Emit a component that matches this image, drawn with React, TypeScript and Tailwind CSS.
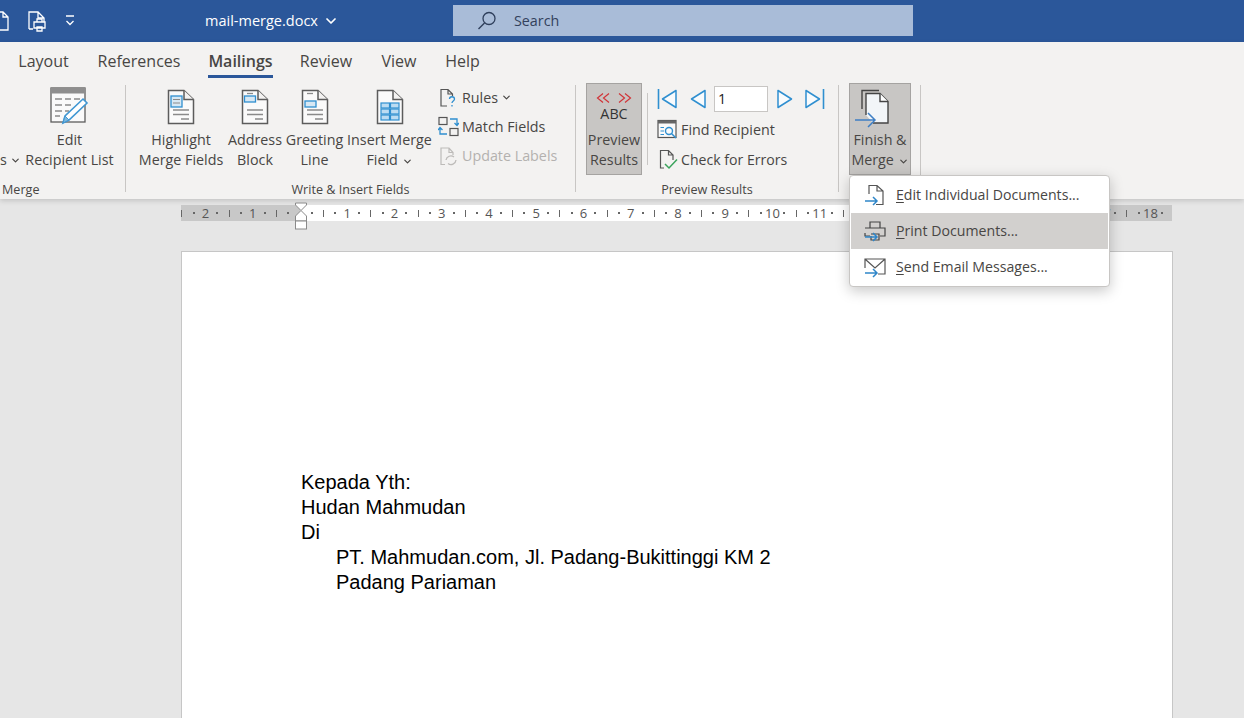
import { ChevronDown } from "lucide-react"
import type { ReactNode } from "react"

const tabs = [
  { name: "Layout", w: "w-[51px] mr-[29px]" },
  { name: "References", w: "w-[82px] mr-[28px]" },
  { name: "Mailings", w: "w-[65px] mr-[27px]", active: true },
  { name: "Review", w: "w-[52px] mr-[29px]" },
  { name: "View", w: "w-[36px] mr-[28px]" },
  { name: "Help", w: "w-[35px]" },
]

function Small({ className = "" }: { className?: string }) {
  return <ChevronDown className={"inline-block h-[11px] w-[11px] " + className} strokeWidth={2.6} />
}

function DocBase({ children }: { children?: ReactNode }) {
  return (
    <svg width="28" height="36" viewBox="0 0 28 36" fill="none">
      <path d="M1.5 1.5H17L26.5 10.5V34.5H1.5Z" fill="#fafafa" stroke="#5c5c5c" strokeWidth="1.5" />
      <path d="M17 1.5V10.5H26.5" fill="#f3f2f1" stroke="#5c5c5c" strokeWidth="1.5" />
      {children}
    </svg>
  )
}

function Lines({ short = false }: { short?: boolean }) {
  return (
    <g stroke="#8a8a8a" strokeWidth="1.3">
      {short && <path d="M6 4.5H12" />}
      <path d="M6 21H22M6 25.5H22M14 30H22" />
    </g>
  )
}

function EditListIcon() {
  return (
    <svg width="40" height="38" viewBox="0 0 40 38" fill="none">
      <rect x="1" y="1" width="34" height="34" fill="#fafafa" stroke="#5c5c5c" strokeWidth="1.3" />
      <rect x="1" y="1" width="34" height="5.5" fill="#8e8e8e" />
      <path d="M5 12H12M15 12H21M24 12H30M5 18H12M15 18H21M5 24H12M15 24H19M5 29H10" stroke="#8a8a8a" strokeWidth="1.3" />
      <path d="M33 12L37 16L19 33L13 36L15 29Z" fill="#fff" stroke="#3f97d3" strokeWidth="1.6" />
      <path d="M15 29L19 33L13 36Z" fill="#7fb8de" stroke="#3f97d3" />
    </svg>
  )
}

function LargeButton({ icon, first, second, w, active }: { icon: ReactNode; first: string; second: ReactNode; w: string; active?: boolean }) {
  return (
    <div className={"flex h-[92px] shrink-0 flex-col items-center text-center " + w + (active ? " border border-[#a5a3a1] bg-[#c8c6c4]" : "")}>
      <div className={"flex h-[47px] items-end justify-center " + (active ? "mb-[-1px]" : "pb-[5px]")}>{icon}</div>
      <div className="whitespace-nowrap leading-[20px]">{first}</div>
      <div className="whitespace-nowrap leading-[20px]">{second}</div>
    </div>
  )
}

function SmallRow({ icon, label, muted, chevron, className = "" }: { icon: ReactNode; label: string; muted?: boolean; chevron?: boolean; className?: string }) {
  return (
    <div className={"flex h-[29px] items-center " + className + (muted ? " text-[#b3b1af]" : "")}>
      <div className="flex w-[24px] shrink-0 justify-start">{icon}</div>
      <span className="whitespace-nowrap">{label}</span>
      {chevron && <Small className="ml-[3px]" />}
    </div>
  )
}

function Divider({ className = "" }: { className?: string }) {
  return <div className={"w-px shrink-0 bg-[#c8c6c4] " + className} />
}

function TriBar({ flip }: { flip?: boolean }) {
  return (
    <svg width="20" height="20" viewBox="0 0 20 20" fill="none" className={flip ? "-scale-x-100" : ""}>
      <path d="M1.5 0V20" stroke="#2f8fd0" strokeWidth="1.6" />
      <path d="M19 1.5V18.5L5.5 10Z" stroke="#2f8fd0" strokeWidth="1.5" strokeLinejoin="round" fill="#f8fbfd" />
    </svg>
  )
}

function Tri({ flip }: { flip?: boolean }) {
  return (
    <svg width="16" height="20" viewBox="0 0 16 20" fill="none" className={flip ? "-scale-x-100" : ""}>
      <path d="M15 1.5V18.5L1.5 10Z" stroke="#2f8fd0" strokeWidth="1.5" strokeLinejoin="round" fill="#f8fbfd" />
    </svg>
  )
}

function ArrowBlue({ x, y }: { x: number; y: number }) {
  return <path d={`M${x} ${y}H${x + 12}M${x + 8} ${y - 4}L${x + 12} ${y}L${x + 8} ${y + 4}`} stroke="#2f86c9" strokeWidth="1.5" fill="none" />
}

function Ruler() {
  const items: ReactNode[] = []
  for (let i = -10; i <= 75; i++) {
    const m = ((i % 4) + 4) % 4
    let node: ReactNode = <span className="h-[2px] w-[2px] bg-[#666]" />
    if (m === 2) node = <span className="h-[7px] w-px bg-[#666]" />
    if (m === 0 && i !== 0) node = <span className="text-[13px] leading-none text-[#555]">{Math.abs(i / 4)}</span>
    if (i === 0) node = null
    items.push(
      <div key={i} className="flex h-[16px] w-[11.82px] shrink-0 items-center justify-center">
        {node}
      </div>
    )
  }
  return (
    <div className="relative ml-[181px] h-[16px] w-[991px] overflow-hidden bg-[#c8c8c8]">
      <div className="absolute inset-y-0 left-[119px] w-[753px] bg-white" />
      <div className="relative -ml-[5px] flex">{items}</div>
    </div>
  )
}

function IndentMarker() {
  return (
    <svg width="14" height="28" viewBox="0 0 14 28" fill="none" className="absolute left-[294px] top-[202px]">
      <path d="M1.5 1H12.5V3L7 8.5L1.5 3Z" fill="#fff" stroke="#8a8a8a" />
      <path d="M7 8.5L12.5 14V19H1.5V14Z" fill="#fff" stroke="#8a8a8a" />
      <rect x="1.5" y="19" width="11" height="8" fill="#fff" stroke="#8a8a8a" />
    </svg>
  )
}

function MenuRow({ icon, u, rest, hot }: { icon: ReactNode; u: string; rest: string; hot?: boolean }) {
  return (
    <div className={"flex h-[36px] items-center " + (hot ? "bg-[#d2d0ce]" : "")}>
      <div className="flex w-[45px] shrink-0 justify-center pl-[2px]">{icon}</div>
      <span className="mb-[1px] whitespace-nowrap text-[14.15px]">
        <span className="underline underline-offset-2">{u}</span>
        {rest}
      </span>
    </div>
  )
}

export default function App() {
  return (
    <div className="relative h-[718px] w-[1244px] overflow-hidden bg-[#e6e6e6] font-['Open_Sans',sans-serif] text-[14.3px] text-[#484644]">
      <header className="flex h-[42px] items-center bg-[#2b579a] text-white">
        <svg width="80" height="24" viewBox="0 0 80 24" fill="none" className="shrink-0">
          <path d="M-4 3H3L8 8V21H-4ZM3 3V8H8" stroke="#fff" strokeWidth="1.3" />
          <path d="M29 20V3H38L44 9V14M38 3V9H44M29 20H33" stroke="#fff" strokeWidth="1.3" />
          <path d="M34 13H45V19H34ZM37 13V10H42V13M37 18H42V22H37Z" fill="#2b579a" stroke="#fff" strokeWidth="1.3" />
          <path d="M66 7H74M66.5 12L70 15.5L73.5 12" stroke="#fff" strokeWidth="1.3" />
        </svg>
        <div className="ml-[125px] flex w-[248px] items-center text-[14.5px]">
          <span>mail-merge.docx</span>
          <ChevronDown className="ml-[5px] h-[16px] w-[16px]" strokeWidth={2.6} />
        </div>
        <div className="mb-[1px] flex h-[31px] w-[460px] items-center bg-[#a9bcd8] pl-[24px] text-[#33415c]">
          <svg width="20" height="20" viewBox="0 0 20 20" fill="none">
            <circle cx="12" cy="7.5" r="6" stroke="#2f3f5c" strokeWidth="1.3" />
            <path d="M7.5 12L1.5 18" stroke="#2f3f5c" strokeWidth="1.5" />
          </svg>
          <span className="ml-[17px]">Search</span>
        </div>
      </header>

      <div className="h-[157px] bg-[#f3f2f1] shadow-[0_2px_5px_rgba(0,0,0,0.15)]">
        <nav className="flex h-[36px] pl-[18px] pt-[1px] text-[16px]">
          {tabs.map((t) => (
            <div key={t.name} className={"relative flex h-[35px] items-center justify-center whitespace-nowrap " + t.w + (t.active ? " font-semibold" : "")}>
              {t.name}
              {t.active && <div className="absolute inset-x-0 bottom-0 h-[3px] bg-[#2b579a]" />}
            </div>
          ))}
        </nav>

        <div className="flex h-[121px]">
          <section className="flex w-[125px] shrink-0 flex-col">
            <div className="flex h-[102px] pt-[5px]">
              <div className="flex h-[92px] w-[25px] shrink-0 items-end justify-start pb-[5px] leading-[20px]">
                s<Small className="mb-[4px] ml-[3px]" />
              </div>
              <LargeButton w="w-[89px]" icon={<EditListIcon />} first="Edit" second="Recipient List" />
            </div>
            <div className="pl-[2px] text-[12.6px] leading-[19px]">Merge</div>
          </section>
          <Divider className="my-[7px]" />

          <section className="flex w-[449px] shrink-0 flex-col">
            <div className="flex h-[102px] pt-[5px] pl-[12px]">
              <LargeButton w="w-[86px]" first="Highlight" second="Merge Fields" icon={
                <DocBase><Lines /><rect x="4" y="7" width="11" height="11" fill="#d7e8f4" stroke="#2f8fd0" strokeWidth="1.3" /><path d="M6 10.5H13M6 14H13" stroke="#8a8a8a" /></DocBase>
              } />
              <LargeButton w="w-[62px]" first="Address" second="Block" icon={
                <DocBase><Lines short /><rect x="3.5" y="7" width="11" height="6" fill="#d7e8f4" stroke="#2f8fd0" strokeWidth="1.3" /></DocBase>
              } />
              <LargeButton w="w-[57px]" first="Greeting" second="Line" icon={
                <DocBase><Lines short /><rect x="4" y="12" width="11" height="6" fill="#d7e8f4" stroke="#2f8fd0" strokeWidth="1.3" /></DocBase>
              } />
              <LargeButton w="w-[83px] ml-[5px]" first="Insert Merge" second={<>Field <Small /></>} icon={
                <DocBase>
                  <g fill="#bcdcf2" stroke="#2f8fd0" strokeWidth="1.2">
                    <rect x="5" y="14" width="8.5" height="5" /><rect x="14.5" y="14" width="8.5" height="5" />
                    <rect x="5" y="20" width="8.5" height="5" /><rect x="14.5" y="20" width="8.5" height="5" />
                    <rect x="5" y="26" width="8.5" height="5" /><rect x="14.5" y="26" width="8.5" height="5" />
                  </g>
                </DocBase>
              } />
              <div className="ml-[7px] flex flex-col">
                <SmallRow chevron label="Rules" icon={
                  <svg width="20" height="20" viewBox="0 0 20 20" fill="none" className="ml-[1px]"><path d="M8 18H2V1.5H9L13.5 6V8M9 1.5V6H13.5" stroke="#555" strokeWidth="1.2" /><path d="M10.5 11C10.5 8 15.5 8 15.5 11C15.5 13 13 13 13 15M13 17V18.5" stroke="#2f8fd0" strokeWidth="1.3" /></svg>
                } />
                <SmallRow label="Match Fields" icon={
                  <svg width="21" height="21" viewBox="0 0 21 21" fill="none"><rect x="1" y="1.5" width="8" height="7" stroke="#555" strokeWidth="1.2" /><rect x="12" y="12.5" width="8" height="7" stroke="#555" strokeWidth="1.2" /><path d="M12 3H19V9M16.5 7L19 9.5L21 7M9 18H2V12M0 14L2 11.5L4.5 14" stroke="#2f8fd0" strokeWidth="1.3" /></svg>
                } />
                <SmallRow muted label="Update Labels" icon={
                  <svg width="20" height="20" viewBox="0 0 20 20" fill="none" className="ml-[1px]"><path d="M6 18.5H2V2H10L14 6.5V9M10 2V6.5H14" stroke="#bdbbb9" strokeWidth="1.2" /><path d="M7 14A5 5 0 0 1 15 11M17 14A5 5 0 0 1 9 17.5" stroke="#bdbbb9" strokeWidth="1.3" /></svg>
                } />
              </div>
            </div>
            <div className="text-center text-[12.6px] leading-[19px]">Write &amp; Insert Fields</div>
          </section>
          <Divider className="my-[7px]" />

          <section className="flex w-[262px] shrink-0 flex-col">
            <div className="flex h-[102px] pt-[5px] pl-[10px]">
              <LargeButton active w="w-[56px]" first="Preview" second="Results" icon={
                <div className="flex h-[47px] flex-col items-center pt-[8px]">
                  <svg width="36" height="12" viewBox="0 0 36 12" fill="none" stroke="#d13438" strokeWidth="1.2">
                    <path d="M7 1.5L1.5 6L7 10.5M13 1.5L7.5 6L13 10.5M23 1.5L28.5 6L23 10.5M29 1.5L34.5 6L29 10.5" />
                  </svg>
                  <span className="mt-[1px] text-[14.3px] leading-[18px] text-[#333]">ABC</span>
                </div>
              } />
              <Divider className="ml-[5px] mt-[10px] h-[72px]" />
              <div className="ml-[9px] flex flex-col">
                <div className="flex h-[32px] items-center">
                  <TriBar />
                  <div className="ml-[13px]"><Tri /></div>
                  <div className="ml-[8px] flex h-[26px] w-[54px] items-center border border-[#c8c6c4] bg-white pl-[3px] text-[#222]">1</div>
                  <div className="ml-[9px]"><Tri flip /></div>
                  <div className="ml-[12px]"><TriBar flip /></div>
                </div>
                <div className="flex h-[29px] items-center">
                  <div className="flex w-[24px] shrink-0">
                    <svg width="21" height="21" viewBox="0 0 21 21" fill="none"><rect x="1" y="1.5" width="18" height="17" fill="#fafafa" stroke="#555" strokeWidth="1.2" /><rect x="1" y="1.5" width="18" height="3" fill="#666" /><circle cx="12" cy="12" r="3.5" stroke="#2f8fd0" strokeWidth="1.4" /><path d="M14.5 14.5L19 19" stroke="#2f8fd0" strokeWidth="1.5" /><path d="M3.5 8.5H7M3.5 12H7M3.5 15.5H7" stroke="#2f8fd0" /></svg>
                  </div>
                  <span className="whitespace-nowrap">Find Recipient</span>
                </div>
                <div className="flex h-[31px] items-center">
                  <div className="flex w-[24px] shrink-0 pl-[2px]">
                    <svg width="20" height="21" viewBox="0 0 20 21" fill="none"><path d="M5 19H1.5V1.5H9.5L14 6V11M9.5 1.5V6H14" stroke="#555" strokeWidth="1.2" /><path d="M6 15L10 19L18 10.5" stroke="#3aa35c" strokeWidth="1.5" /></svg>
                  </div>
                  <span className="whitespace-nowrap text-[14.1px]">Check for Errors</span>
                </div>
              </div>
            </div>
            <div className="text-center text-[12.6px] leading-[19px]">Preview Results</div>
          </section>
          <Divider className="my-[7px]" />

          <section className="flex pt-[5px] pl-[10px]">
            <LargeButton active w="w-[62px]" first="Finish &" second={<>Merge <Small /></>} icon={
              <div className="flex h-[47px] pt-[5px] pr-[14px]">
                <svg width="36" height="40" viewBox="0 0 36 40" fill="none">
                  <path d="M7 20V1.5H24" stroke="#444" strokeWidth="1.4" />
                  <path d="M11 26V4.5H25L33 12.5V34H18" fill="#f2f5f8" stroke="#444" strokeWidth="1.4" />
                  <path d="M25 4.5V12.5H33" fill="#fff" stroke="#444" strokeWidth="1.4" />
                  <path d="M0 31H20M13 24L20 31L13 38" stroke="#3f7fc4" strokeWidth="1.5" />
                </svg>
              </div>
            } />
            <Divider className="ml-[9px] mt-[2px] h-[90px]" />
          </section>
        </div>
      </div>

      <div className="pt-[6px]">
        <Ruler />
      </div>

      <main className="ml-[181px] mt-[30px] h-[467px] w-[992px] border-l border-r border-t border-[#c6c6c6] bg-white pl-[119px] pt-[218px] font-['Liberation_Sans',sans-serif] text-[20px] leading-[25px] text-black">
        <p>Kepada Yth:</p>
        <p>Hudan Mahmudan</p>
        <p>Di</p>
        <p className="pl-[35px]">PT. Mahmudan.com, Jl. Padang-Bukittinggi KM 2</p>
        <p className="pl-[35px]">Padang Pariaman</p>
      </main>

      <IndentMarker />

      <div className="absolute left-[849px] top-[175px] w-[261px] rounded-[4px] border border-[#c8c6c4] bg-white p-px shadow-[0_4px_14px_rgba(0,0,0,0.22)]">
        <MenuRow u="E" rest="dit Individual Documents..." icon={
          <svg width="22" height="22" viewBox="0 0 22 22" fill="none"><path d="M5 10V1.5H13L19 7V20.5H12M13 1.5V7H19" stroke="#555" strokeWidth="1.2" /><ArrowBlue x={1} y={17} /></svg>
        } />
        <MenuRow hot u="P" rest="rint Documents..." icon={
          <svg width="22" height="22" viewBox="0 0 22 22" fill="none"><path d="M6 8V2H16V8M1 8H21V16H16M6 16H1V13" stroke="#444" strokeWidth="1.2" /><path d="M7 16V20H15V14H7" stroke="#444" strokeWidth="1.2" /><ArrowBlue x={1} y={17} /></svg>
        } />
        <MenuRow u="S" rest="end Email Messages..." icon={
          <svg width="22" height="22" viewBox="0 0 22 22" fill="none"><path d="M1 12V3H21V18H14M1.5 3.5L11 12L20.5 3.5" stroke="#555" strokeWidth="1.2" /><ArrowBlue x={1} y={17} /></svg>
        } />
      </div>
    </div>
  )
}
